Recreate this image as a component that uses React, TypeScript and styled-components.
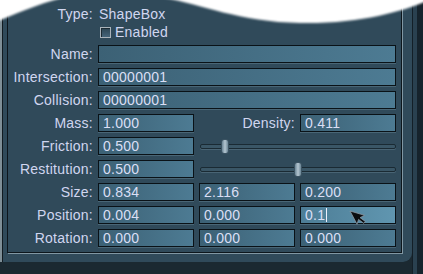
import React from 'react';
import styled, { createGlobalStyle } from 'styled-components';

const GlobalStyle = createGlobalStyle`
  html, body {
    margin: 0;
    padding: 0;
    background: #ffffff;
  }
  body {
    font-family: "Liberation Sans", Arial, sans-serif;
  }
`;

const Frame = styled.div`
  position: relative;
  width: 423px;
  height: 274px;
  overflow: hidden;
  background: linear-gradient(
    90deg,
    #1b2931 0,
    #1b2931 412px,
    #131f27 412px,
    #131f27 413px,
    #2a4150 413px,
    #2a4150 417px,
    #16232c 417px
  );
`;

const Panel = styled.div`
  width: 412px;
  height: 262px;
  box-sizing: border-box;
  padding-left: 5px;
  background: #304a5a;
  border-left: 2px solid #7f8f97;
  border-bottom-right-radius: 9px;
  box-shadow: inset 1px 0 0 #111b21;
`;

const Group = styled.div`
  width: 395px;
  box-sizing: border-box;
  padding: 5px 5px 5px 0;
  border: 1px solid #0d161c;
  border-top: none;
  box-shadow: 1px 1px 0 #8197a3;
`;

const Rows = styled.div<{ $top?: number }>`
  display: grid;
  grid-template-columns: 85px 96px 96px 96px;
  grid-auto-rows: 18px;
  column-gap: 5px;
  row-gap: ${(p) => (p.$top ? 5 : 0)}px;
  margin-top: ${(p) => p.$top ?? 0}px;
`;

const Label = styled.span<{ $span?: number }>`
  grid-column: span ${(p) => p.$span ?? 1};
  text-align: right;
  color: #d0d6f0;
  font-size: 14px;
  letter-spacing: 0.25px;
  line-height: 18px;
  white-space: nowrap;
`;

const Value = styled.span`
  grid-column: span 3;
  padding-left: 1px;
  color: #d0d6f0;
  font-size: 14px;
  letter-spacing: 0.25px;
  line-height: 18px;
`;

const CheckRow = styled.label`
  grid-column: span 3;
  display: flex;
  align-items: center;
  gap: 4px;
  padding-left: 2px;
  color: #d0d6f0;
  font-size: 14px;
  letter-spacing: 0.25px;
  line-height: 18px;
`;

const CheckBox = styled.span`
  width: 11px;
  height: 11px;
  box-sizing: border-box;
  border: 1px solid #aab3ba;
  background: linear-gradient(180deg, #2c4452, #46657a);
  box-shadow: inset 1px 1px 0 #1c2b34;
  margin-top: 1px;
`;

const Field = styled.div<{ $span?: number; $focused?: boolean }>`
  grid-column: span ${(p) => p.$span ?? 1};
  display: flex;
  align-items: center;
  height: 18px;
  box-sizing: border-box;
  padding: 0 4px;
  border: 1px solid #0a1217;
  background: ${(p) =>
    p.$focused
      ? 'linear-gradient(90deg, #4d7d96, #6096b0)'
      : 'linear-gradient(90deg, #3c6175, #4d7b93)'};
  box-shadow: 0 1px 0 rgba(120, 155, 172, 0.35);
  color: #dadff5;
  font-size: 14px;
  letter-spacing: 0.25px;
  line-height: 16px;
  white-space: nowrap;
  overflow: hidden;
`;

const Caret = styled.span`
  display: inline-block;
  width: 1px;
  height: 14px;
  margin-left: 1px;
  background: #eef0ff;
`;

const SliderBox = styled.div`
  grid-column: span 2;
  display: flex;
  align-items: center;
  padding-left: 1px;
`;

const Track = styled.div`
  position: relative;
  flex: 1;
  height: 5px;
  box-sizing: border-box;
  border: 1px solid #1a2a33;
  border-radius: 2px;
  background: #3a5666;
  box-shadow: 0 1px 0 rgba(120, 150, 165, 0.35);
`;

const Thumb = styled.span`
  position: absolute;
  top: -6px;
  width: 8px;
  height: 15px;
  box-sizing: border-box;
  transform: translateX(-50%);
  border: 1px solid #3b5362;
  border-radius: 3px;
  background: linear-gradient(90deg, #6a8595, #b4c6d1 50%, #6a8595);
`;

const Wave = styled.svg`
  position: absolute;
  left: 0;
  top: 0;
  pointer-events: none;
`;

const Pointer = styled.svg`
  position: absolute;
  left: 350px;
  top: 211px;
  overflow: visible;
`;

const Slider = ({ value, max }: { value: number; max: number }) => (
  <SliderBox>
    <Track>
      <Thumb style={{ left: `${(value / max) * 100}%` }} />
    </Track>
  </SliderBox>
);

export default function App() {
  return (
    <>
      <GlobalStyle />
      <Frame>
        <Panel>
          <Group>
            <Rows>
              <Label>Type:</Label>
              <Value>ShapeBox</Value>
              <span />
              <CheckRow>
                <CheckBox />
                Enabled
              </CheckRow>
            </Rows>
            <Rows $top={4}>
              <Label>Name:</Label>
              <Field $span={3} />

              <Label>Intersection:</Label>
              <Field $span={3}>00000001</Field>

              <Label>Collision:</Label>
              <Field $span={3}>00000001</Field>

              <Label>Mass:</Label>
              <Field>1.000</Field>
              <Label>Density:</Label>
              <Field>0.411</Field>

              <Label>Friction:</Label>
              <Field>0.500</Field>
              <Slider value={0.5} max={4} />

              <Label>Restitution:</Label>
              <Field>0.500</Field>
              <Slider value={0.5} max={1} />

              <Label>Size:</Label>
              <Field>0.834</Field>
              <Field>2.116</Field>
              <Field>0.200</Field>

              <Label>Position:</Label>
              <Field>0.004</Field>
              <Field>0.000</Field>
              <Field $focused>
                0.1
                <Caret />
              </Field>

              <Label>Rotation:</Label>
              <Field>0.000</Field>
              <Field>0.000</Field>
              <Field>0.000</Field>
            </Rows>
          </Group>
        </Panel>

        <Wave width="423" height="32" viewBox="0 0 423 32">
          <defs>
            <filter id="soft" x="-5%" y="-50%" width="110%" height="200%">
              <feGaussianBlur stdDeviation="1.2" />
            </filter>
          </defs>
          <path
            d="M-4,-4 L-4,22 C12,15 38,4 62,-2 L165,-2 C200,4 240,22 300,23 C360,24 400,12 427,1 L427,-4 Z"
            fill="#ffffff"
            filter="url(#soft)"
          />
        </Wave>

        <Pointer width="16" height="20" viewBox="0 0 16 20">
          <path
            d="M0,0 L0,15 L3.6,11.4 L6.4,17.4 L8.6,16.4 L5.8,10.6 L10.8,10.6 Z"
            fill="#0a0d10"
            stroke="#8d99a3"
            strokeWidth="0.7"
            transform="rotate(-28)"
          />
        </Pointer>
      </Frame>
    </>
  );
}
